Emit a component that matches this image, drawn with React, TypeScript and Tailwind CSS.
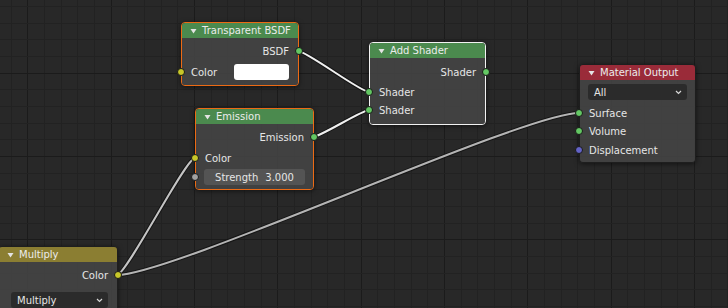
import React from 'react';

interface NodeProps {
    left: number;
    top: number;
    width: number;
    title: string;
    header: string;
    border: string;
    children: React.ReactNode;
}

interface RowProps {
    label: string;
    side: 'in' | 'out';
    socket: string;
    className?: string;
}

const W = 728;
const H = 308;

const Grid: React.FC = () => {
    const xs = Array.from({ length: 44 }, (_, k) => k);
    const ys = Array.from({ length: 19 }, (_, k) => k);
    return (
        <svg width={W} height={H} className="absolute left-0 top-0" shapeRendering="crispEdges">
            {xs.map((k) => {
                const x = Math.round(10.67 + 16.667 * k) + 0.5;
                return <line key={'x' + k} x1={x} y1={0} x2={x} y2={H} stroke={(k - 1) % 5 === 0 ? '#1b1b1b' : '#222222'} strokeWidth={1} />;
            })}
            {ys.map((k) => {
                const y = Math.round(6 + 16.667 * k) + 0.5;
                return <line key={'y' + k} x1={0} y1={y} x2={W} y2={y} stroke={k % 5 === 4 ? '#1b1b1b' : '#222222'} strokeWidth={1} />;
            })}
        </svg>
    );
};

// bezier like blender's noodles, low curving
const curve = (x1: number, y1: number, x2: number, y2: number) => {
    const d = Math.abs(x2 - x1) * 0.12;
    return `M${x1},${y1} C${x1 + d},${y1} ${x2 - d},${y2} ${x2},${y2}`;
};

const links = [
    { d: curve(298, 51, 369, 92), color: '#f0f0f0' },
    { d: curve(313, 137, 369, 110), color: '#f0f0f0' },
    { d: curve(117, 275, 195, 158), color: '#c4c4c4' },
    { d: curve(117, 275, 579, 113), color: '#b4b4b4' },
];

const Links: React.FC = () => (
    <svg width={W} height={H} className="absolute left-0 top-0">
        {links.map((l, i) => (
            <g key={i} fill="none">
                <path d={l.d} stroke="#151515" strokeWidth={4} />
                <path d={l.d} stroke={l.color} strokeWidth={2} />
            </g>
        ))}
    </svg>
);

const Triangle: React.FC = () => (
    <svg width="7" height="6" viewBox="0 0 7 6" className="mr-[5px] shrink-0">
        <path d="M0.5 1 L6.5 1 L3.5 5.5 Z" fill="#e4e4e4" />
    </svg>
);

const Socket: React.FC<{ side: 'in' | 'out'; color: string }> = ({ side, color }) => (
    <span
        className={
            'absolute top-1/2 -translate-y-1/2 w-[8px] h-[8px] rounded-full border border-[#181818] ' +
            (side === 'in' ? 'left-[-5px]' : 'right-[-5px]')
        }
        style={{ backgroundColor: color }}
    />
);

const Row: React.FC<RowProps> = ({ label, side, socket, className }) => (
    <div className={'relative h-[18px] flex items-center px-[9px] ' + (side === 'out' ? 'justify-end ' : '') + (className ?? '')}>
        <span>{label}</span>
        <Socket side={side} color={socket} />
    </div>
);

const Node: React.FC<NodeProps> = ({ left, top, width, title, header, border, children }) => (
    <div
        className={'absolute rounded-[4px] border shadow-[0_1px_5px_rgba(0,0,0,0.55)] ' + border}
        style={{ left, top, width }}
    >
        <div className={'h-[15px] flex items-center pl-[8px] rounded-t-[3px] text-[#ececec] ' + header}>
            <Triangle />
            <span className="leading-none">{title}</span>
        </div>
        <div className="bg-[rgba(70,70,70,0.86)] rounded-b-[3px]">{children}</div>
    </div>
);

const Chevron: React.FC = () => (
    <svg width="7" height="5" viewBox="0 0 7 5">
        <path d="M1 1 L3.5 3.5 L6 1" stroke="#d8d8d8" strokeWidth="1.2" fill="none" />
    </svg>
);

const GREEN = '#63c763';
const YELLOW = '#c7c729';
const GRAY = '#a1a1a1';
const PURPLE = '#6363c7';

export default function App() {
    return (
        <div
            className="relative w-[728px] h-[308px] overflow-hidden bg-[#282828] text-[10px] text-[#e6e6e6]"
            style={{ fontFamily: '"DejaVu Sans", sans-serif' }}
        >
            <Grid />
            <Links />

            <Node left={181} top={22} width={118} title="Transparent BSDF" header="bg-[#4b8a4e]" border="border-[#ec6a14]">
                <div className="pt-[4px] pb-[4px] flex flex-col gap-[3px]">
                    <Row label="BSDF" side="out" socket={GREEN} />
                    <div className="relative h-[18px] flex items-center pl-[9px] pr-[9px] justify-between">
                        <span>Color</span>
                        <div className="w-[55px] h-[16px] rounded-[3px] bg-white" />
                        <Socket side="in" color={YELLOW} />
                    </div>
                </div>
            </Node>

            <Node left={369} top={42} width={117} title="Add Shader" header="bg-[#4b8a4e]" border="border-[#f2f2f2]">
                <div className="pt-[5px] pb-[5px] flex flex-col">
                    <Row label="Shader" side="out" socket={GREEN} />
                    <Row label="Shader" side="in" socket={GREEN} className="mt-[2px]" />
                    <Row label="Shader" side="in" socket={GREEN} />
                </div>
            </Node>

            <Node left={195} top={108} width={119} title="Emission" header="bg-[#4b8a4e]" border="border-[#ec6a14]">
                <div className="pt-[4px] pb-[3px] flex flex-col">
                    <Row label="Emission" side="out" socket={GREEN} />
                    <Row label="Color" side="in" socket={YELLOW} className="mt-[3px]" />
                    <div className="relative h-[18px] mt-[1px] flex items-center px-[8px]">
                        <div className="w-full h-[16px] rounded-[3px] bg-[#545454] flex items-center justify-center gap-[7px]">
                            <span>Strength</span>
                            <span>3.000</span>
                        </div>
                        <Socket side="in" color={GRAY} />
                    </div>
                </div>
            </Node>

            <Node left={579} top={64} width={117} title="Material Output" header="bg-[#9a2b39]" border="border-[#1e1e1e]">
                <div className="pt-[4px] pb-[3px] flex flex-col">
                    <div className="mx-[8px] h-[16px] rounded-[3px] bg-[#2b2b2b] flex items-center justify-between pl-[6px] pr-[5px]">
                        <span>All</span>
                        <Chevron />
                    </div>
                    <Row label="Surface" side="in" socket={GREEN} className="mt-[4px]" />
                    <Row label="Volume" side="in" socket={GREEN} />
                    <Row label="Displacement" side="in" socket={PURPLE} className="mt-[1px]" />
                </div>
            </Node>

            <Node left={-2} top={246} width={120} title="Multiply" header="bg-[#8b7e32]" border="border-[#1e1e1e]">
                <div className="pt-[4px] pb-[10px] flex flex-col">
                    <Row label="Color" side="out" socket={YELLOW} />
                    <div className="mt-[8px] ml-[12px] mr-[9px] h-[16px] rounded-[3px] bg-[#2b2b2b] flex items-center justify-between pl-[6px] pr-[5px]">
                        <span>Multiply</span>
                        <Chevron />
                    </div>
                </div>
            </Node>
        </div>
    );
}
